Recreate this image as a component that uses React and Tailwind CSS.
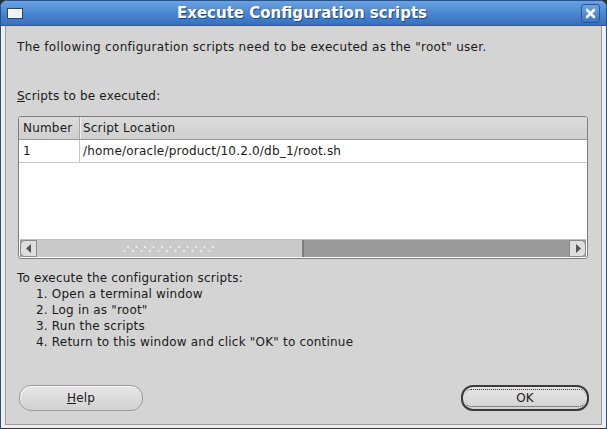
import React from 'react';

const FONT = { fontFamily: '"DejaVu Sans", "Liberation Sans", sans-serif' };

function Grip() {
  // dotted grip on the scrollbar thumb
  const dots = [];
  for (let i = 0; i < 11; i++) {
    dots.push(<circle key={`a${i}`} cx={5 + i * 8.5} cy={3} r={1} fill="#f4f4f4" />);
    dots.push(<circle key={`b${i}`} cx={1.5 + i * 8.5} cy={7} r={1} fill="#f4f4f4" />);
  }
  return (
    <svg width="94" height="10" viewBox="0 0 94 10">
      {dots}
    </svg>
  );
}

function Arrow({ dir }) {
  return (
    <svg width="6" height="9" viewBox="0 0 6 9">
      {dir === 'left' ? <path d="M5 0 L0 4.5 L5 9 Z" fill="#555" /> : <path d="M1 0 L6 4.5 L1 9 Z" fill="#555" />}
    </svg>
  );
}

export default function App() {
  return (
    <div className="w-[607px] h-[429px] bg-[#2e2e2e] p-0" style={FONT}>
      <div className="w-full h-full flex flex-col rounded-t-[7px] overflow-hidden bg-[#efeeec] border border-[#2f4f7f] border-b-[#3a3a3a]">
        {/* Title bar */}
        <div className="h-[25px] flex items-center px-[6px] bg-gradient-to-b from-[#6aa3e3] via-[#4a86d0] to-[#3a70bd] border-b border-[#2c5a9a]">
          <div className="w-[16px] h-[11px] bg-[#f2f2f2] border border-[#27456f] shadow-[inset_1px_1px_0_#ffffff]" />
          <div className="flex-1 text-center text-white font-bold text-[15px] leading-none [text-shadow:1px_1px_0_#1f4680]">
            Execute Configuration scripts
          </div>
          <div className="w-[19px] h-[19px] rounded-[3px] border border-[#2a5793] bg-gradient-to-b from-[#6fa6e6] to-[#3d74c0] flex items-center justify-center">
            <svg width="11" height="11" viewBox="0 0 11 11">
              <path d="M2 2 L9 9 M9 2 L2 9" stroke="#ffffff" strokeWidth="2.6" strokeLinecap="round" />
            </svg>
          </div>
        </div>

        {/* Body */}
        <div className="flex-1 mx-[4px] mb-[3px] border-l border-r border-b border-[#9c9c9c] bg-[#d4d4d4] flex flex-col text-[12px] tracking-[0.2px] text-[#1a1a1a] px-[11px]">
          <p className="mt-[13px] leading-[16px] tracking-[0.3px]">
            The following configuration scripts need to be executed as the "root" user.
          </p>
          <p className="mt-[33px] leading-[16px]">
            <span className="underline">S</span>cripts to be executed:
          </p>

          {/* Table */}
          <div className="mt-[12px] h-[143px] mr-[2px] ml-[1px] border border-[#7d7d7d] rounded-[3px] bg-white flex flex-col overflow-hidden">
            <div className="h-[23px] flex bg-gradient-to-b from-[#dcdcdc] to-[#cfcfcf] border-b border-[#9a9a9a]">
              <div className="w-[61px] px-[4px] flex items-center border-r border-[#a8a8a8] shadow-[1px_0_0_#f0f0f0]">Number</div>
              <div className="flex-1 px-[3px] flex items-center">Script Location</div>
            </div>
            <div className="h-[23px] flex border-b border-[#c8c8c8]">
              <div className="w-[61px] px-[4px] flex items-center border-r border-[#c8c8c8]">1</div>
              <div className="flex-1 px-[3px] flex items-center">/home/oracle/product/10.2.0/db_1/root.sh</div>
            </div>
            <div className="flex-1" />
            {/* Horizontal scrollbar */}
            <div className="h-[18px] flex bg-[#9b9b9b] border-t border-[#c0c0c0] mx-[1px] mb-[1px]">
              <div className="w-[17px] flex items-center justify-center bg-[#dedede] border border-[#8a8a8a] rounded-l-[5px]">
                <Arrow dir="left" />
              </div>
              <div className="w-[267px] flex items-center justify-center bg-[#cacaca] border-r-2 border-[#7e7e7e]">
                <Grip />
              </div>
              <div className="flex-1" />
              <div className="w-[17px] flex items-center justify-center bg-[#dedede] border border-[#8a8a8a] rounded-r-[5px]">
                <Arrow dir="right" />
              </div>
            </div>
          </div>

          <div className="mt-[11px] leading-[16px]">
            <p>To execute the configuration scripts:</p>
            <ol className="pl-[19px]">
              <li>1. Open a terminal window</li>
              <li>2. Log in as "root"</li>
              <li>3. Run the scripts</li>
              <li>4. Return to this window and click "OK" to continue</li>
            </ol>
          </div>

          <div className="flex-1" />

          <div className="flex justify-between mb-[13px] ml-[2px] mr-[1px]">
            <button className="w-[124px] h-[26px] rounded-[12px] border border-[#9a9a9a] bg-gradient-to-b from-[#e6e6e6] to-[#d2d2d2] shadow-[inset_1px_1px_0_#f8f8f8] text-[12px]">
              <span className="underline">H</span>elp
            </button>
            <button className="w-[128px] h-[26px] rounded-[12px] border-2 border-[#3a3a3a] bg-gradient-to-b from-[#e6e6e6] to-[#d2d2d2] text-[12px] p-[2px]">
              <span className="w-full h-full flex items-center justify-center border-t border-b border-dotted border-[#333] rounded-[6px]">OK</span>
            </button>
          </div>
        </div>
      </div>
    </div>
  );
}
